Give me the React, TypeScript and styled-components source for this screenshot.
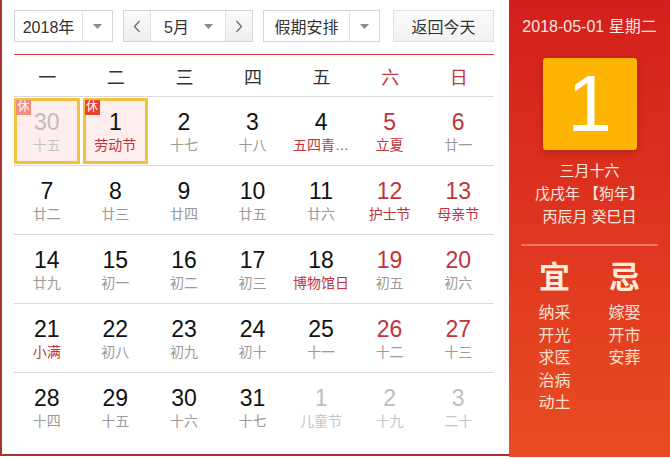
import React from 'react';
import styled, { createGlobalStyle } from 'styled-components';

type Day = {
  n: number;
  sub: string;
  other?: boolean;
  weekend?: boolean;
  festival?: boolean;
  rest?: boolean;
  selected?: boolean;
};

const rows: Day[][] = [
  [
    { n: 30, sub: '十五', other: true, rest: true, selected: true },
    { n: 1, sub: '劳动节', festival: true, rest: true, selected: true },
    { n: 2, sub: '十七' },
    { n: 3, sub: '十八' },
    { n: 4, sub: '五四青…', festival: true },
    { n: 5, sub: '立夏', weekend: true, festival: true },
    { n: 6, sub: '廿一', weekend: true },
  ],
  [
    { n: 7, sub: '廿二' },
    { n: 8, sub: '廿三' },
    { n: 9, sub: '廿四' },
    { n: 10, sub: '廿五' },
    { n: 11, sub: '廿六' },
    { n: 12, sub: '护士节', weekend: true, festival: true },
    { n: 13, sub: '母亲节', weekend: true, festival: true },
  ],
  [
    { n: 14, sub: '廿九' },
    { n: 15, sub: '初一' },
    { n: 16, sub: '初二' },
    { n: 17, sub: '初三' },
    { n: 18, sub: '博物馆日', festival: true },
    { n: 19, sub: '初五', weekend: true },
    { n: 20, sub: '初六', weekend: true },
  ],
  [
    { n: 21, sub: '小满', festival: true },
    { n: 22, sub: '初八' },
    { n: 23, sub: '初九' },
    { n: 24, sub: '初十' },
    { n: 25, sub: '十一' },
    { n: 26, sub: '十二', weekend: true },
    { n: 27, sub: '十三', weekend: true },
  ],
  [
    { n: 28, sub: '十四' },
    { n: 29, sub: '十五' },
    { n: 30, sub: '十六' },
    { n: 31, sub: '十七' },
    { n: 1, sub: '儿童节', other: true },
    { n: 2, sub: '十九', other: true },
    { n: 3, sub: '二十', other: true },
  ],
];

const weekdays = ['一', '二', '三', '四', '五', '六', '日'];
const good = ['纳采', '开光', '求医', '治病', '动土'];
const bad = ['嫁娶', '开市', '安葬'];

const Caret = () => (
  <svg width="9" height="5" viewBox="0 0 9 5">
    <path d="M0 0h9L4.5 5z" fill="#8a8a8a" />
  </svg>
);

const Chevron = ({ dir }: { dir: 'left' | 'right' }) => (
  <svg width="8" height="13" viewBox="0 0 8 13">
    <path
      d={dir === 'left' ? 'M6.5 1 1.5 6.5l5 5.5' : 'M1.5 1l5 5.5-5 5.5'}
      fill="none"
      stroke="#666"
      strokeWidth="1.2"
    />
  </svg>
);

const App = () => {
  return (
    <>
      <GlobalStyle />
      <Widget>
        <Main>
          <Toolbar>
            <Select $w={99}>
              <SelectText>2018年</SelectText>
              <SelectArrow>
                <Caret />
              </SelectArrow>
            </Select>
            <MonthGroup>
              <NavButton>
                <Chevron dir="left" />
              </NavButton>
              <MonthPart>
                <span>5月</span>
                <Caret />
              </MonthPart>
              <NavButton>
                <Chevron dir="right" />
              </NavButton>
            </MonthGroup>
            <Select $w={117}>
              <SelectText>假期安排</SelectText>
              <SelectArrow>
                <Caret />
              </SelectArrow>
            </Select>
            <TodayButton>返回今天</TodayButton>
          </Toolbar>
          <WeekHeader>
            {weekdays.map((w, i) => (
              <WeekDay key={w} $red={i >= 5}>
                {w}
              </WeekDay>
            ))}
          </WeekHeader>
          {rows.map((row, ri) => (
            <Row key={ri} $last={ri === rows.length - 1}>
              {row.map((d, di) => (
                <Cell key={di} $selected={d.selected}>
                  {d.rest && <RestBadge $faded={d.other}>休</RestBadge>}
                  <DayNum $other={d.other} $red={d.weekend}>
                    {d.n}
                  </DayNum>
                  <Lunar $other={d.other} $red={d.festival}>
                    {d.sub}
                  </Lunar>
                </Cell>
              ))}
            </Row>
          ))}
        </Main>
        <Side>
          <DateLine>2018-05-01 星期二</DateLine>
          <BigDay>1</BigDay>
          <LunarInfo>
            <div>三月十六</div>
            <div>戊戌年 【狗年】</div>
            <div>丙辰月 癸巳日</div>
          </LunarInfo>
          <Divider />
          <Advice>
            <AdviceCol>
              <AdviceTitle>宜</AdviceTitle>
              {good.map((g) => (
                <AdviceItem key={g}>{g}</AdviceItem>
              ))}
            </AdviceCol>
            <AdviceCol>
              <AdviceTitle>忌</AdviceTitle>
              {bad.map((b) => (
                <AdviceItem key={b}>{b}</AdviceItem>
              ))}
            </AdviceCol>
          </Advice>
        </Side>
      </Widget>
    </>
  );
};

export default App;

const GlobalStyle = createGlobalStyle`
  body {
    margin: 0;
    background: #fff;
    font-family: "Liberation Sans", "Noto Sans CJK SC", sans-serif;
  }
`;

const Widget = styled.div`
  display: flex;
  width: 670px;
  height: 457px;
  overflow: hidden;
`;

const Main = styled.div`
  box-sizing: border-box;
  width: 509px;
  height: 456px;
  padding: 10px 15px 0 12px;
  border-left: 2px solid #a8342e;
  border-bottom: 2px solid #a8342e;
  display: flex;
  flex-direction: column;
`;

const Toolbar = styled.div`
  display: flex;
  align-items: stretch;
  height: 32px;
  gap: 10px;
  padding-bottom: 12px;
  border-bottom: 1px solid #d2433d;
  font-size: 16px;
  color: #333;
`;

const Select = styled.div<{ $w: number }>`
  width: ${(p) => p.$w}px;
  box-sizing: border-box;
  display: flex;
  border: 1px solid #d5d5d5;
  background: #fff;
`;

const SelectText = styled.div`
  flex: 1;
  display: flex;
  align-items: center;
  justify-content: center;
`;

const SelectArrow = styled.div`
  width: 29px;
  border-left: 1px solid #e2e2e2;
  display: flex;
  align-items: center;
  justify-content: center;
`;

const MonthGroup = styled.div`
  width: 130px;
  box-sizing: border-box;
  display: flex;
  border: 1px solid #d5d5d5;
`;

const NavButton = styled.div`
  width: 26px;
  display: flex;
  align-items: center;
  justify-content: center;
  background: linear-gradient(#fafafa, #eeeeee);
`;

const MonthPart = styled.div`
  flex: 1;
  display: flex;
  align-items: center;
  justify-content: space-between;
  padding: 0 12px 0 13px;
  border-left: 1px solid #e0e0e0;
  border-right: 1px solid #e0e0e0;
  background: #fff;
`;

const TodayButton = styled.div`
  margin-left: 3px;
  flex: 1;
  box-sizing: border-box;
  display: flex;
  align-items: center;
  justify-content: center;
  border: 1px solid #e0e0e0;
  background: linear-gradient(#fbfbfb, #f1f1f1);
`;

const WeekHeader = styled.div`
  display: grid;
  grid-template-columns: repeat(7, 1fr);
  height: 41px;
  border-bottom: 1px solid #d9d9d9;
`;

const WeekDay = styled.div<{ $red?: boolean }>`
  display: flex;
  align-items: center;
  justify-content: center;
  padding-right: 2px;
  font-size: 18px;
  color: ${(p) => (p.$red ? '#c2343a' : '#333')};
`;

const Row = styled.div<{ $last?: boolean }>`
  display: grid;
  grid-template-columns: repeat(7, 1fr);
  height: 68px;
  border-bottom: ${(p) => (p.$last ? 'none' : '1px solid #d9d9d9')};
`;

const Cell = styled.div<{ $selected?: boolean }>`
  position: relative;
  margin: 1px 3px 0 0;
  box-sizing: border-box;
  display: flex;
  flex-direction: column;
  align-items: center;
  padding-top: ${(p) => (p.$selected ? '8px' : '11px')};
  border: ${(p) => (p.$selected ? '3px solid #f2c23a' : 'none')};
  background: ${(p) => (p.$selected ? '#fdeded' : 'transparent')};
  height: 66px;
`;

const RestBadge = styled.span<{ $faded?: boolean }>`
  position: absolute;
  top: -1px;
  left: -1px;
  width: 15px;
  height: 15px;
  font-size: 12px;
  line-height: 15px;
  text-align: center;
  color: #fff;
  background: ${(p) => (p.$faded ? '#f28d80' : '#e8432f')};
`;

const DayNum = styled.div<{ $other?: boolean; $red?: boolean }>`
  font-size: 23px;
  line-height: 26px;
  color: ${(p) => (p.$other ? '#bdbdbd' : p.$red ? '#c2343a' : '#111')};
`;

const Lunar = styled.div<{ $other?: boolean; $red?: boolean }>`
  font-size: 14px;
  line-height: 21px;
  white-space: nowrap;
  color: ${(p) => (p.$red ? '#c2343a' : p.$other ? '#c4c4c4' : '#9a9a9a')};
`;

const Side = styled.div`
  width: 161px;
  flex-shrink: 0;
  height: 457px;
  display: flex;
  flex-direction: column;
  align-items: center;
  background: linear-gradient(#d31f1c, #e94c22);
  color: #fff;
`;

const DateLine = styled.div`
  margin-top: 16px;
  font-size: 16px;
  line-height: 22px;
  color: #fbe6e0;
`;

const BigDay = styled.div`
  margin-top: 20px;
  width: 94px;
  height: 92px;
  border-radius: 3px;
  background: #fdb402;
  box-shadow: 0 2px 6px rgba(120, 20, 0, 0.35);
  display: flex;
  align-items: center;
  justify-content: center;
  font-size: 80px;
  color: #fff;
`;

const LunarInfo = styled.div`
  margin-top: 9px;
  font-size: 15px;
  line-height: 23px;
  text-align: center;
  color: #fbe9e0;
`;

const Divider = styled.div`
  margin-top: 16px;
  width: 137px;
  height: 2px;
  background: #f2735f;
`;

const Advice = styled.div`
  display: flex;
  gap: 38px;
  margin-top: 14px;
`;

const AdviceCol = styled.div`
  display: flex;
  flex-direction: column;
  align-items: center;
`;

const AdviceTitle = styled.div`
  font-size: 31px;
  line-height: 36px;
  font-weight: bold;
  color: #fdebdc;
  margin-bottom: 6px;
`;

const AdviceItem = styled.div`
  font-size: 16px;
  line-height: 22.5px;
  color: #fbe0cf;
`;
